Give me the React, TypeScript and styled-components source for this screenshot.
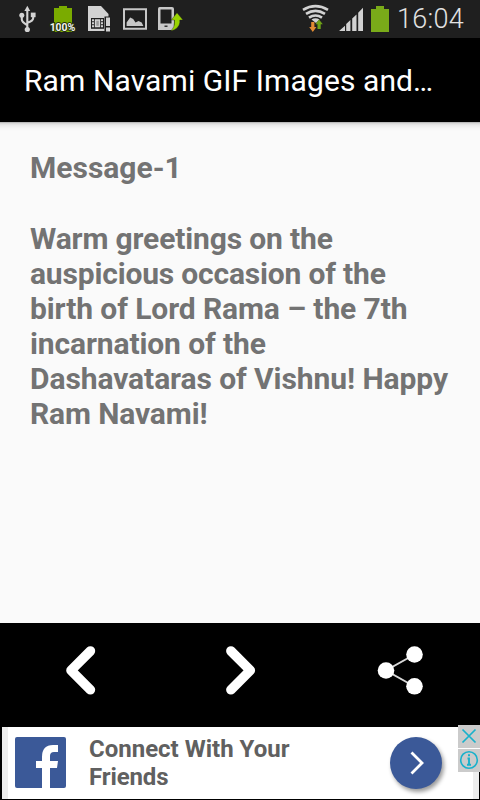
import React from "react";
import styled, { createGlobalStyle } from "styled-components";

const GlobalStyle = createGlobalStyle`
  body { margin: 0; background: #000; font-family: Roboto, sans-serif; }
`;

const Screen = styled.main`
  width: 480px;
  height: 800px;
  display: flex;
  flex-direction: column;
  overflow: hidden;
  background: #000;
`;

const StatusBar = styled.header`
  height: 38px;
  flex: none;
  display: flex;
  justify-content: space-between;
  background: #1f1f1f;
`;

const StatusIcons = styled.svg`
  display: block;
  flex: none;
`;

const StatusRight = styled.div`
  display: flex;
`;

const Percent = styled.text`
  font: 700 10.5px Roboto, sans-serif;
  fill: #f4f4f4;
  stroke: #27330c;
  stroke-width: 2px;
  paint-order: stroke;
`;

const Clock = styled.time`
  width: 83px;
  line-height: 38px;
  font-size: 27px;
  font-weight: 300;
  letter-spacing: 0.3px;
  color: #e2e2e2;
  white-space: nowrap;
`;

const AppBar = styled.h1`
  box-sizing: border-box;
  margin: 0;
  height: 84px;
  flex: none;
  padding: 1px 0 0 24px;
  line-height: 84px;
  font-size: 30px;
  font-weight: 400;
  letter-spacing: 0.1px;
  color: #fff;
  white-space: nowrap;
`;

const Content = styled.section`
  box-sizing: border-box;
  height: 501px;
  flex: none;
  padding: 28px 0 0 30px;
  background: linear-gradient(#a2a2a2 0, #d2d2d2 1px, #e8e8e8 3px, #f4f4f4 6px, #fafafa 9px);
  color: #737373;
`;

const Line = styled.div<{ $spacing?: number }>`
  height: 35px;
  line-height: 35px;
  font-size: 30px;
  font-weight: 700;
  white-space: pre;
  letter-spacing: ${(p) => p.$spacing ?? 0}px;
`;

const Heading = styled(Line)`
  margin-bottom: 36px;
`;

const NavBar = styled.nav`
  height: 104px;
  flex: none;
  display: grid;
  grid-template-columns: repeat(3, 1fr);
`;

const NavButton = styled.button`
  border: 0;
  padding: 0 0 10px;
  background: none;
  display: flex;
  align-items: center;
  justify-content: center;
`;

const AdWrap = styled.aside`
  position: relative;
  box-sizing: border-box;
  height: 72px;
  flex: none;
  margin: 0 1px 0 2px;
  padding-left: 7px;
  display: flex;
  align-items: flex-start;
  background: #fff;
  border-left: 6px solid #ededed;
  border-right: 6px solid #ededed;
`;

const AdText = styled.p`
  width: 301px;
  margin: 8px 0 0 23px;
  line-height: 28px;
  font-size: 24px;
  font-weight: 700;
  color: #606060;
`;

const AdLine = styled.span<{ $spacing?: number }>`
  display: block;
  letter-spacing: ${(p) => p.$spacing ?? 0}px;
`;

const FacebookLogo = styled.svg`
  margin-top: 10px;
  flex: none;
`;

const AdButton = styled.button`
  width: 52px;
  height: 52px;
  margin-top: 10px;
  flex: none;
  padding: 0;
  border: 0;
  border-radius: 50%;
  background: #3b5998;
  box-shadow: 2px 3px 4px rgba(0, 0, 0, 0.4);
`;

const AdBadges = styled.div`
  position: absolute;
  top: -2px;
  right: -7px;
  display: grid;
  gap: 1px;
  background: #fff;
`;

const Badge = styled.svg`
  display: block;
  background: #cbcbcb;
`;

const messageLines = [
  { text: "Warm greetings on the", spacing: -0.14 },
  { text: "auspicious occasion of the", spacing: -0.18 },
  { text: "birth of Lord Rama – the 7th", spacing: -0.1 },
  { text: "incarnation of the", spacing: -0.12 },
  { text: "Dashavataras of Vishnu! Happy", spacing: -0.08 },
  { text: "Ram Navami!", spacing: -0.12 },
];

function Notifications() {
  return (
    <StatusIcons width="200" height="38" viewBox="0 0 200 38">
      <g fill="#d2d2d2" stroke="#d2d2d2">
        <path d="M27.3 10V29M21.8 16V19.5Q21.8 22 27 25M33.2 15V18Q33.2 21 27 23" fill="none" strokeWidth="2.1" />
        <path d="M27.3 5.8L30.2 11H24.4Z" stroke="none" />
        <circle cx="21.8" cy="15.2" r="2.5" stroke="none" />
        <path d="M30.8 12.6h4.8v4.6h-4.8z" stroke="none" />
        <circle cx="27.3" cy="29.5" r="2.6" stroke="none" />
      </g>
      <path d="M54 8h5V6h8v2h5v24H54z" fill="#7aab00" />
      <Percent x="49.7" y="30.7" textLength="25.5">100%</Percent>
      <path d="M88 6h13l7.5 8v3h-3v14H88z" fill="#d2d2d2" />
      <path d="M91 18h13v10.8H91z" fill="#1f1f1f" />
      <path d="M92 19.3h2v2h-2zm0 3h2v2h-2zm0 3h2v2h-2zm9-6h2v2h-2zm0 3h2v2h-2zm0 3h2v2h-2zM94.8 19.3h5.4v8h-5.4z" fill="#d2d2d2" />
      <path d="M96.3 20.8h2.5v5h-2.5z" fill="#999" />
      <path d="M104.5 16.5h6v15h-6z" fill="#1f1f1f" />
      <path d="M106 17.5h4v8.5h-4zm0 10h4v4h-4z" fill="#d2d2d2" />
      <path d="M124 9.2h22v19.6h-22z" fill="none" stroke="#c8c8c8" strokeWidth="2" />
      <path d="M126.6 26v-3.5l3.6-5 3 1.5 2.3 3.5 3-1.5 3.2 1.5 1.7 3.5z" fill="#c8c8c8" />
      <path d="M158 8.7Q158 7 159.7 7H172Q174 7 174 9v21h-16z" fill="#c8c8c8" />
      <path d="M160.5 9.5h11v14h-11z" fill="#1f1f1f" />
      <path d="M164.5 25.5h3v1.5h-3z" fill="#333" />
      <path d="M177 12.8l6 7.2h-3.2v2.5q-.7 6.4-9 8.5 4-3.8 3.6-8.5V20h-3.2z" fill="#99d300" stroke="#1f1f1f" strokeWidth=".4" />
    </StatusIcons>
  );
}

function Signals() {
  return (
    <StatusIcons width="97" height="38" viewBox="300 0 97 38">
      <g fill="none" stroke="#d2d2d2" strokeWidth="2.7">
        <path d="M303 9.8Q315.5 2.5 328 9.8" />
        <path d="M306 13.8Q315.5 8 325 13.8" />
        <path d="M309 17.7Q315.5 13.3 322 17.7" />
      </g>
      <path d="M311.5 19.5q4-2.3 8 0L316 23z" fill="#d2d2d2" />
      <path d="M311.2 22h3.2v5h2l-3.6 5-3.6-5h2z" fill="#e28b32" />
      <path d="M319 19.5l3.8 4.7h-2.1V29h-3.2v-4.8h-2z" fill="#6ea316" />
      <path d="M339 31l6-5.3V31zm7.2 0v-7l4.2-4V31zm6 0V18.5l4.3-4V31zm6 0V12.8l4.8-5V31z" fill="#d2d2d2" />
      <path d="M371 9h5V6h8v3h5v23h-18z" fill="#7aab19" />
    </StatusIcons>
  );
}

export default function App() {
  return (
    <>
      <GlobalStyle />
      <Screen>
        <StatusBar>
          <Notifications />
          <StatusRight>
            <Signals />
            <Clock>16:04</Clock>
          </StatusRight>
        </StatusBar>
        <AppBar>Ram Navami GIF Images and…</AppBar>
        <Content>
          <Heading>Message-1</Heading>
          {messageLines.map((line) => (
            <Line key={line.text} $spacing={line.spacing}>{line.text}</Line>
          ))}
        </Content>
        <NavBar>
          <NavButton aria-label="Previous">
            <svg width="60" height="60" viewBox="0 0 60 60">
              <path d="M40.4 11L21 30.4 40.4 49.8" fill="none" stroke="#fff" strokeWidth="9.6" strokeLinecap="round" strokeLinejoin="round" />
            </svg>
          </NavButton>
          <NavButton aria-label="Next">
            <svg width="60" height="60" viewBox="0 0 60 60">
              <path d="M20.9 11L40.3 30.4 20.9 49.8" fill="none" stroke="#fff" strokeWidth="9.6" strokeLinecap="round" strokeLinejoin="round" />
            </svg>
          </NavButton>
          <NavButton aria-label="Share">
            <svg width="60" height="60" viewBox="0 0 60 60">
              <path d="M44.5 14.5L16 30.5 44.5 46.5" fill="none" stroke="#d8d8d8" strokeWidth="2" />
              <g fill="#fff">
                <circle cx="44.5" cy="14.5" r="8.3" />
                <circle cx="16" cy="30.5" r="8.3" />
                <circle cx="44.5" cy="46.3" r="8.3" />
              </g>
            </svg>
          </NavButton>
        </NavBar>
        <AdWrap>
          <FacebookLogo width="51" height="51" viewBox="0 0 51 51">
            <rect width="51" height="51" rx="2" fill="#3b5998" />
            <path d="M27 51V31h-6v-7h6v-4q0-12 11-12h5v7h-4q-4 0-4 4v5h8l-1 7h-7v20z" fill="#fff" />
          </FacebookLogo>
          <AdText>
            <AdLine>Connect With Your</AdLine>
            <AdLine $spacing={-0.12}>Friends</AdLine>
          </AdText>
          <AdButton aria-label="Open">
            <svg width="52" height="52" viewBox="0 0 52 52">
              <path d="M21.5 15.5L32 26 21.5 36.5" fill="none" stroke="#fff" strokeWidth="2.8" />
            </svg>
          </AdButton>
          <AdBadges>
            <Badge width="22" height="23" viewBox="0 0 22 23">
              <path d="M4.5 4.5l13 13m0-13l-13 13" stroke="#19b1cb" strokeWidth="1.7" />
            </Badge>
            <Badge width="22" height="23" viewBox="0 0 22 23">
              <circle cx="11" cy="11" r="8.3" fill="none" stroke="#19b1cb" strokeWidth="1.6" />
              <path d="M9.5 9.5H11v6m-2 .3h4M10 6.3h2" fill="none" stroke="#19b1cb" strokeWidth="1.9" />
            </Badge>
          </AdBadges>
        </AdWrap>
      </Screen>
    </>
  );
}
